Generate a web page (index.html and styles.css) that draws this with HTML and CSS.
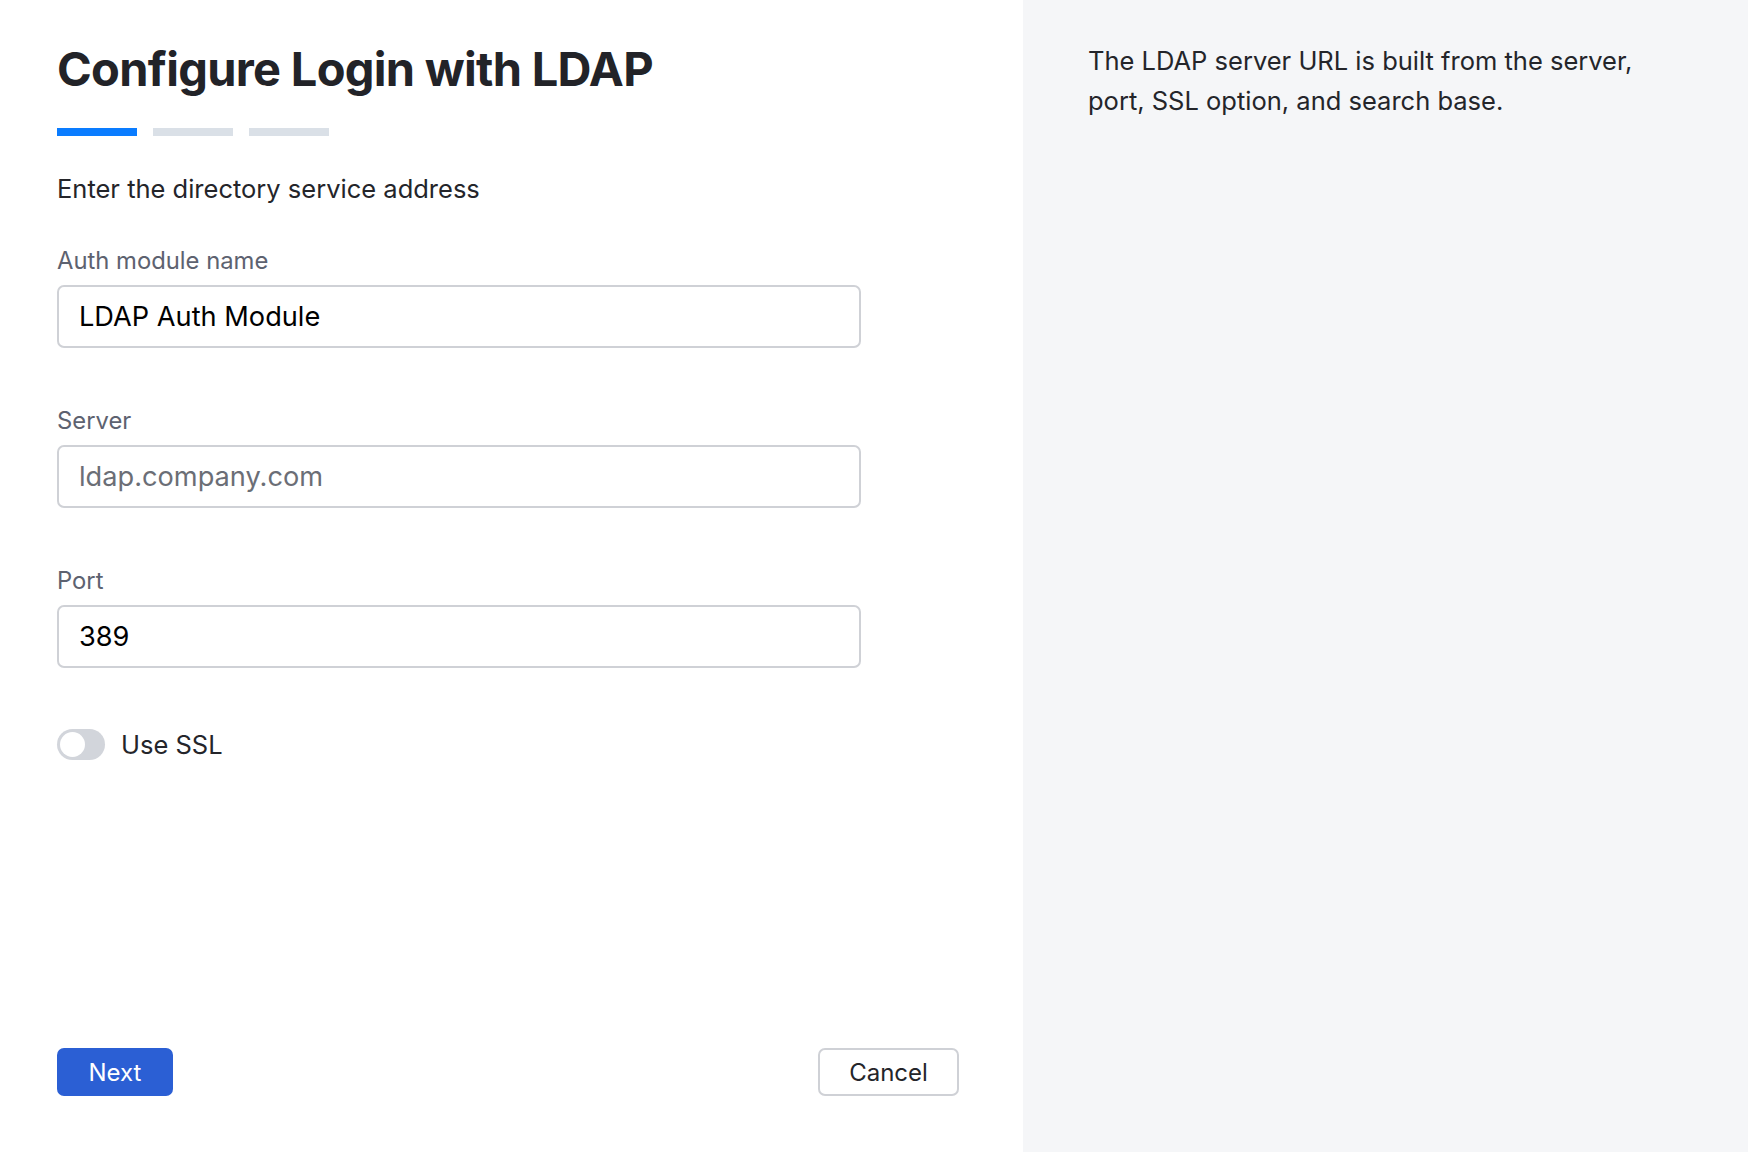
FILE: index.html
```html
<!DOCTYPE html>
<html lang="en">
<head>
  <meta charset="UTF-8" />
  <meta name="viewport" content="width=device-width, initial-scale=1.0"/>
  <title>Configure Login with LDAP</title>
  <link rel="stylesheet" href="styles.css">
</head>
<body>
  <main class="wizard">
    <section class="form-panel">
      <h1 class="title">Configure Login with LDAP</h1>
      <div class="steps">
        <span class="step active"></span>
        <span class="step"></span>
        <span class="step"></span>
      </div>
      <p class="subtitle">Enter the directory service address</p>

      <div class="field">
        <label for="authName">Auth module name</label>
        <input type="text" id="authName" value="LDAP Auth Module">
      </div>
      <div class="field">
        <label for="server">Server</label>
        <input type="text" id="server" placeholder="ldap.company.com">
      </div>
      <div class="field">
        <label for="port">Port</label>
        <input type="text" id="port" value="389">
      </div>

      <label class="switch-row">
        <span class="switch"><span class="knob"></span></span>
        <span>Use SSL</span>
      </label>

      <div class="actions">
        <button class="btn primary">Next</button>
        <button class="btn secondary">Cancel</button>
      </div>
    </section>

    <aside class="help-panel">
      <p>The LDAP server URL is built from the server, port, SSL option, and search base.</p>
    </aside>
  </main>
</body>
</html>
```
FILE: styles.css
```css
html, body {
  margin: 0;
  height: 100%;
}

body {
  font-family: 'Inter', 'Noto Sans', sans-serif;
  color: #24252a;
  background: #ffffff;
}

.wizard {
  display: flex;
  height: 100vh;
}

/* Colonne gauche : le formulaire */
.form-panel {
  width: 1023px;
  box-sizing: border-box;
  padding: 40px 64px 56px 57px;
  display: flex;
  flex-direction: column;
}

.title {
  margin: 0;
  font-size: 47px;
  line-height: 58px;
  font-weight: 700;
  letter-spacing: -0.7px;
  color: #222328;
}

.steps {
  display: flex;
  gap: 16px;
  margin-top: 30px;
}

.step {
  width: 80px;
  height: 8px;
  background: #dae0e7;
}

.step.active {
  background: #0a7cff;
}

.subtitle {
  margin: 36px 0 42px;
  font-size: 25.5px;
  line-height: 33px;
  color: #24252a;
}

.field {
  display: flex;
  flex-direction: column;
  width: 804px;
  margin-bottom: 59px;
}

.field label {
  font-size: 23.8px;
  line-height: 28px;
  color: #5d6270;
  margin-bottom: 10px;
}

.field input {
  height: 63px;
  box-sizing: border-box;
  padding: 0 20px;
  border: 2px solid #cfd1d6;
  border-radius: 7px;
  font-family: inherit;
  font-size: 27.2px;
  color: #000;
  outline: none;
}

.field input::placeholder {
  color: #6b6e76;
}

.switch-row {
  display: flex;
  align-items: center;
  gap: 16px;
  font-size: 25.5px;
  color: #24252a;
  margin-top: 2px;
}

.switch {
  width: 48px;
  height: 31px;
  border-radius: 16px;
  background: #d2d5db;
  padding: 3px;
  box-sizing: border-box;
}

.knob {
  display: block;
  width: 25px;
  height: 25px;
  border-radius: 50%;
  background: #ffffff;
}

.actions {
  margin-top: auto;
  display: flex;
  justify-content: space-between;
}

.btn {
  height: 48px;
  box-sizing: border-box;
  border-radius: 7px;
  font-family: inherit;
  font-size: 24px;
  cursor: pointer;
}

.btn.primary {
  width: 116px;
  background: #2b5fd4;
  border: none;
  color: #ffffff;
}

.btn.secondary {
  width: 141px;
  background: #ffffff;
  border: 2px solid #cfd1d6;
  color: #24252a;
}

/* Colonne droite : aide */
.help-panel {
  flex: 1;
  background: #f5f6f8;
  padding: 41px 64px 0 65px;
}

.help-panel p {
  margin: 0;
  max-width: 570px;
  font-size: 25.5px;
  line-height: 40px;
  color: #24252a;
}
```
